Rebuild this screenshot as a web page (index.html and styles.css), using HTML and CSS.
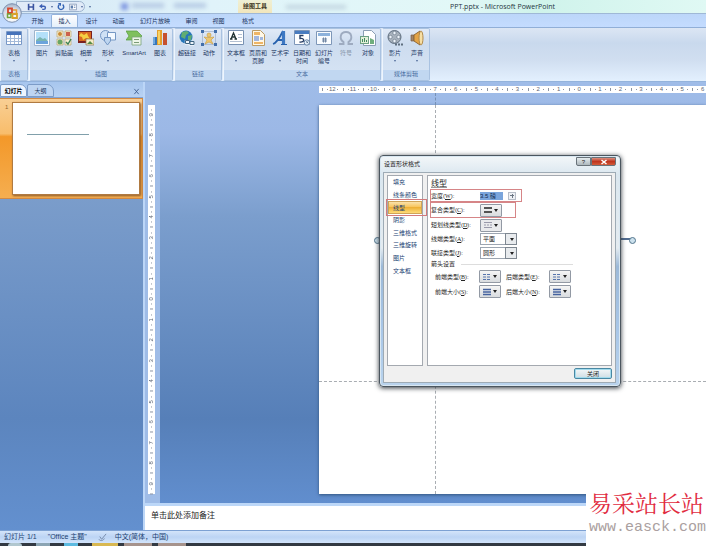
FILE: index.html
```html
<!DOCTYPE html>
<html lang="zh-CN">
<head>
<meta charset="utf-8">
<title>PPT.pptx - Microsoft PowerPoint</title>
<link rel="stylesheet" href="styles.css">
</head>
<body>
<header class="titlebar">
  <div class="quick">
    <button aria-label="保存"><svg viewBox="0 0 10 10"><path fill="#3b54a0" d="M1 1h8v8H1z"/><path fill="#e8effb" d="M3 1h4v3H3zM3 6h4v3H3z"/></svg></button>
    <button aria-label="撤消"><svg viewBox="0 0 10 10"><path fill="none" stroke="#3c5fb4" stroke-width="1.8" d="M3 4h3a2 2 0 0 1 0 4H4"/><path fill="#3c5fb4" d="M0 4l4-3v6z"/></svg></button>
    <i class="tiny-arrow"></i>
    <button aria-label="恢复"><svg viewBox="0 0 10 10"><path fill="none" stroke="#3565b5" stroke-width="1.8" d="M3 2a3.4 3.4 0 1 0 4 0"/><path fill="#3565b5" d="M1 0h4v4z"/></svg></button>
    <button aria-label="演示"><svg viewBox="0 0 10 10"><path fill="#fff" stroke="#8094b4" d="M.5 1.500h9v7h-9z"/><path fill="#5e7fae" d="M2 3h3v4H2zM6 3h2v1H6zM6 5h2v1H6z"/></svg></button>
    <i class="tiny-arrow"></i>
  </div>
  <i class="tiny-arrow more"></i>
  <div class="glass"><i class="dot"></i><i></i><i></i></div>
  <strong class="context">绘图工具</strong>
  <div class="glass second"><i></i></div>
  <h1>PPT.pptx - Microsoft PowerPoint</h1>
</header>
<button class="orb" aria-label="Office 按钮"><svg viewBox="0 0 20 20"><defs><radialGradient id="orb" cx=".5" cy=".8" r=".9"><stop offset="0" stop-color="#fff"/><stop offset=".6" stop-color="#d5dce7"/><stop offset="1" stop-color="#8b9db9"/></radialGradient></defs><circle cx="10" cy="10" r="9.300" fill="url(#orb)" stroke="#7d90ae"/><path fill="none" stroke="#d6472b" stroke-width="1.800" d="M6 10V5.500h4V10z"/><path fill="none" stroke="#e99b2e" stroke-width="1.500" d="M11 7h3.500v3.500H11"/><path fill="none" stroke="#74a53d" stroke-width="1.500" d="M9 11H5.500v3.500H9z"/><path fill="none" stroke="#d8a32a" stroke-width="1.800" d="M10.500 11H15v4h-4.500z"/></svg></button>
<nav class="tabs">
  <button>开始</button><button class="active">插入</button><button>设计</button><button>动画</button><button class="wide">幻灯片放映</button><button>审阅</button><button>视图</button><button class="format">格式</button>
</nav>
<section class="ribbon">
  <div class="group"><div class="tools">
    <button><svg viewBox="0 0 16 16"><path fill="#fff" stroke="#7898c7" d="M.5 1.500h15v13H.5z"/><path fill="#4773ba" d="M1 2h14v3H1z"/><path fill="none" stroke="#a4bad9" d="M1 8.500h14M1 11.500h14M4.500 5v9M8.500 5v9M12.500 5v9"/></svg><span>表格</span><i class="tiny-arrow"></i></button>
  </div><h2>表格</h2></div>
  <div class="group"><div class="tools">
    <button><svg viewBox="0 0 16 16"><path fill="#fafdff" stroke="#9fb4cc" d="M.5.5h15v15H.5z"/><path fill="#b4e0f9" d="M2 2h12v8H2z"/><path fill="#79b5b0" d="M2 10l4-3 3 2 2-1 3 3v1H2z"/><path fill="#6ba4dc" d="M2 11h12v3H2z"/></svg><span>图片</span></button>
    <button><svg viewBox="0 0 16 16"><path fill="#f9f0d4" stroke="#bda66c" stroke-width=".7" d="M1 1h6v6H1zM9 1h6v6H9zM1 9h6v6H1zM9 9h6v6H9z"/><circle cx="4" cy="4" r="2" fill="#ca8a35"/><path fill="#cc624d" d="M10 2h4v4h-4z"/><circle cx="4" cy="12" r="2.500" fill="#69a563"/><path fill="none" stroke="#3d8154" stroke-width="1.400" d="M10 12l2 2 3-5"/></svg><span>剪贴画</span></button>
    <button><svg viewBox="0 0 16 16"><path fill="#7a2020" d="M0 1h14v12H0z"/><path fill="#da6a21" d="M1 2h12v9H1z"/><path fill="#f4cf42" d="M3 3l3 2 3-2 1 3 2 3-4-1-3 2-1-3-3-1z"/><path fill="#f6edc8" stroke="#8d7348" stroke-width=".7" d="M8 9h8v6H8z"/><path fill="#578c47" d="M9 14l3-3 3 3H9z"/></svg><span>相册</span><i class="tiny-arrow"></i></button>
    <button><svg viewBox="0 0 16 16"><circle cx="5.500" cy="5.500" r="5" fill="#cfe1f5" stroke="#7597c4"/><path fill="#f4f9ff" stroke="#7597c4" d="M7.500 2.500h8V10h-8z"/><path fill="#bdd5f0" stroke="#7597c4" d="M4.500 7.500h6V11l-3 4-3-4z"/></svg><span>形状</span><i class="tiny-arrow"></i></button>
    <button class="smart"><svg viewBox="0 0 16 16"><path fill="#7fc05e" stroke="#569b3d" stroke-width=".7" d="M0 1h11l5 5-4 4H0l3-4z"/><path fill="#edf5e8" stroke="#7aa27a" stroke-width=".8" d="M6 7h9v8H6z"/><path stroke="#7b9b77" d="M8 9.500h5M8 12.500h5"/></svg><span>SmartArt</span></button>
    <button><svg viewBox="0 0 16 16"><path fill="#3777bb" d="M1 7h4v8H1z"/><path fill="#e4a02e" d="M5 0h5v15H5z"/><path fill="#f7d265" d="M6 1h2v13H6z"/><path fill="#c6512e" d="M11 3h4v12h-4z"/><path fill="#71a8dd" d="M1 7h2v7H1z"/></svg><span>图表</span></button>
  </div><h2>插图</h2></div>
  <div class="group"><div class="tools">
    <button><svg viewBox="0 0 16 16"><circle cx="7" cy="7" r="6.500" fill="#2676b9"/><path fill="#60ad72" d="M3 2l5-1 2 2-3 2-1 4-4-2zM9 6l4-1-1 5-3 1z"/><path fill="none" stroke="#eef4fa" stroke-width="2.500" d="M7 11.500h3v2H7zM11 12.500h3v2h-3z"/><path fill="none" stroke="#3f6582" d="M6.500 10.500h4v3h-4zM11 11.500h4v3h-4z"/></svg><span>超链接</span></button>
    <button><svg viewBox="0 0 16 16"><path fill="none" stroke="#869bbb" stroke-dasharray="1 1" d="M1.500 1.500h13v13h-13z"/><circle cx="8" cy="5" r="2" fill="#edc66f" stroke="#c79a3d" stroke-width=".6"/><path fill="#edc66f" stroke="#c79a3d" stroke-width=".6" d="M3 7l4 .5h2L13 7l-3 3 2 4-4-2-4 2 2-4z"/><path fill="#426fab" d="M0 0h3v3H0zM13 0h3v3h-3zM0 13h3v3H0zM13 13h3v3h-3z"/></svg><span>动作</span></button>
  </div><h2>链接</h2></div>
  <div class="group"><div class="tools">
    <button><svg viewBox="0 0 16 16"><path fill="#fff" stroke="#7891b2" d="M.5.5h15v14H.5z"/><path fill="none" stroke="#233" stroke-width="1.300" d="M3 9l2.500-6L8 9M4 7h3M2 9h2.500M6.500 9H9"/><path stroke="#b3c0d2" d="M10 4.500h4M10 7.500h4M2 11.500h12"/></svg><span>文本框</span><i class="tiny-arrow"></i></button>
    <button><svg viewBox="0 0 16 16"><path fill="#fff7e6" stroke="#ba9b65" d="M2.500.5h8l4 4v11h-12z"/><path fill="#efb565" d="M4 2h6v3H4zM4 12h9v2H4z"/><path fill="#a3b7de" d="M4 6h5v5H4zM10 7h3v3h-3z"/></svg><span>页眉和<br>页脚</span></button>
    <button><svg viewBox="0 0 16 16"><path fill="none" stroke="#2862ae" stroke-width="1.800" d="M1 14C5 13 8 7 11 1M5 10h7"/><path fill="none" stroke="#3d78c3" stroke-width="3.200" d="M11.500 1v13.500"/><path stroke="#2862ae" d="M9 14.500h6"/></svg><span>艺术字</span><i class="tiny-arrow"></i></button>
    <button><svg viewBox="0 0 16 16"><path fill="#fff" stroke="#7e96b8" d="M.5.500h15v14H.5z"/><path fill="#487bbf" d="M1 1h14v3H1z"/><path fill="none" stroke="#273d63" stroke-width="1.400" d="M9.500 5.500H6v3c5-1 5 4.500-.5 3.500"/><circle cx="12.800" cy="12.500" r="2.700" fill="#e2edf8" stroke="#6682a4"/><path fill="none" stroke="#45617e" stroke-width=".8" d="M12.800 11v1.500H14"/></svg><span>日期和<br>时间</span></button>
    <button><svg viewBox="0 0 16 16"><path fill="#f9fcff" stroke="#7e97b8" d="M.5 1.500h15v13H.5z"/><path fill="#8db2dc" d="M2 3h12v3H2z"/><path stroke="#7187a4" d="M6 9h5M6 11h5M7.500 7.500v5M9.500 7.500v5"/></svg><span>幻灯片<br>编号</span></button>
    <button class="disabled" disabled><svg viewBox="0 0 16 16"><path fill="none" stroke="#9eabc0" stroke-width="1.900" d="M1 14h4.500v-2C1 9 2 2 8 2s7 7 2.500 10v2H15"/></svg><span>符号</span></button>
    <button><svg viewBox="0 0 16 16"><path fill="#fff" stroke="#8b9eb5" d="M3.500.5h8l4 4v11h-12z"/><path fill="#6da083" d="M0 6h9v8H0z"/><path fill="#e3f0d8" d="M1 7h7v6H1z"/><path fill="#408960" d="M2 12V9h1v3zM4 12V8h1v4zM6 12v-2h1v2z"/><path fill="#6fae7d" d="M10 8l4 2v4h-4z"/></svg><span>对象</span></button>
  </div><h2>文本</h2></div>
  <div class="group"><div class="tools">
    <button><svg viewBox="0 0 16 16"><circle cx="7.500" cy="7" r="6.500" fill="#a7b1bc" stroke="#5f6e7f"/><g fill="#eef4fa" stroke="#5f6e7f" stroke-width=".6"><circle cx="7.500" cy="3" r="1.700"/><circle cx="3.500" cy="7" r="1.700"/><circle cx="11.500" cy="7" r="1.700"/><circle cx="7.500" cy="11" r="1.700"/></g><path stroke="#5f6e7f" stroke-width="2" stroke-dasharray="2 1" d="M8 14.500h8"/></svg><span>影片</span><i class="tiny-arrow"></i></button>
    <button><svg viewBox="0 0 16 16"><path fill="#a1856a" stroke="#765d47" stroke-width=".7" d="M2 5h3v6H2z"/><path fill="#e4a447" stroke="#906835" d="M5 5l6-4v14l-6-4z"/><ellipse cx="12" cy="8" rx="2" ry="7" fill="#f7dfa4" stroke="#b28a4a"/></svg><span>声音</span><i class="tiny-arrow"></i></button>
  </div><h2>媒体剪辑</h2></div>
</section>
<main>
  <aside>
    <div class="panel-tabs"><button class="on">幻灯片</button><button>大纲</button><button class="close" aria-label="关闭窗格"><svg viewBox="0 0 8 8"><path fill="none" stroke="#3f5d8d" d="M1.500 1l5 6M6.500 1l-5 6"/></svg></button></div>
    <div class="thumb"><span>1</span><div class="mini"><i></i></div></div>
  </aside>
  <div class="editor">
    <div class="stage">
      <div class="vruler"><span>9</span><span>8</span><span>7</span><span>6</span><span>5</span><span>4</span><span>3</span><span>2</span><span>1</span><span>0</span><span>1</span><span>2</span><span>3</span><span>4</span><span>5</span><span>6</span><span>7</span><span>8</span><span>9</span></div>
      <div class="canvas">
        <div class="hruler"><div class="scale"><span>12</span><span>11</span><span>10</span><span>9</span><span>8</span><span>7</span><span>6</span><span>5</span><span>4</span><span>3</span><span>2</span><span>1</span><span>0</span><span>1</span><span>2</span><span>3</span><span>4</span><span>5</span><span>6</span></div></div>
        <div class="slide"><i class="guide-v"></i><i class="guide-h"></i><i class="shape"></i></div>
      </div>
    </div>
    <div class="notes">单击此处添加备注</div>
  </div>
</main>
<footer class="status"><span>幻灯片 1/1</span><span>"Office 主题"</span><svg viewBox="0 0 10 10"><path fill="none" stroke="#7084a5" d="M2 4l2 3 5-6M1 7c1 2 5 2 6-1"/></svg><span>中文(简体，中国)</span></footer>
<div class="taskbar"><i class="start"></i><i class="folder"></i><i class="blue"></i><i class="yellow"></i><i class="window"></i><i class="window"></i></div>

<section class="dialog" role="dialog" aria-labelledby="dlg">
  <div class="caption"><h2 id="dlg">设置形状格式</h2><button class="help" aria-label="帮助">?</button><button class="shut" aria-label="关闭对话框"><svg viewBox="0 0 8 6"><path stroke="#fff" stroke-width="1.500" d="M1.500 1l5 4M6.500 1l-5 4"/></svg></button></div>
  <div class="body">
    <div class="panes">
      <nav class="pages"><button>填充</button><button>线条颜色</button><button class="picked">线型</button><button>阴影</button><button>三维格式</button><button>三维旋转</button><button>图片</button><button>文本框</button></nav>
      <div class="options">
        <h3>线型</h3>
        <div class="field width-field"><label for="w">宽度(<u>W</u>):</label><input id="w" value="3.5 磅"><span class="spin"></span></div>
        <div class="field compound"><label for="c">复合类型(<u>C</u>):</label><button id="c" class="pick"><svg viewBox="0 0 8 8"><path stroke="#222" stroke-width="1.500" d="M0 2h8M0 6h8"/></svg></button></div>
        <div class="field"><label for="d">短划线类型(<u>D</u>):</label><button id="d" class="pick pale"><svg viewBox="0 0 8 8"><path stroke="#99a" d="M0 1.500h8M0 6.500h8"/><path stroke="#99a" stroke-dasharray="2 1" d="M0 4h8"/></svg></button></div>
        <div class="field"><label for="a">线端类型(<u>A</u>):</label><span class="combo"><select id="a"><option>平面</option></select></span></div>
        <div class="field"><label for="j">联接类型(<u>J</u>):</label><span class="combo"><select id="j"><option>圆形</option></select></span></div>
        <h4>箭头设置</h4>
        <div class="pair"><label for="b">前端类型(<u>B</u>):</label><button id="b" class="pick"><svg viewBox="0 0 8 8"><path stroke="#5674ad" stroke-dasharray="3 1" d="M0 1.500h8M0 4h8M0 6.500h8"/></svg></button><label for="e">后端类型(<u>E</u>):</label><button id="e" class="pick"><svg viewBox="0 0 8 8"><path stroke="#5674ad" stroke-dasharray="3 1" d="M0 1.500h8M0 4h8M0 6.500h8"/></svg></button></div>
        <div class="pair"><label for="s">前端大小(<u>S</u>):</label><button id="s" class="pick"><svg viewBox="0 0 8 8"><path stroke="#4663a0" stroke-width="1.400" d="M0 1.500h8M0 4h8M0 6.500h8"/></svg></button><label for="n">后端大小(<u>N</u>):</label><button id="n" class="pick"><svg viewBox="0 0 8 8"><path stroke="#4663a0" stroke-width="1.400" d="M0 1.500h8M0 4h8M0 6.500h8"/></svg></button></div>
      </div>
    </div>
    <button class="done">关闭</button>
  </div>
</section>
<div class="watermark"><b>易采站长站</b><span>www.easck.com</span></div>
</body>
</html>
```
FILE: styles.css
```css
* { box-sizing: border-box; }
body { margin: 0; height: 100vh; display: flex; flex-direction: column; position: relative; overflow: hidden; background: #6f96cc; color: #1c3661; font: 6px/8px "Liberation Sans", "Noto Sans CJK SC", sans-serif; }
button, input, select { font: inherit; color: inherit; margin: 0; padding: 0; border: 0; background: none; }
h1, h2, h3, h4 { margin: 0; font: inherit; }
svg { display: block; }
.tiny-arrow { width: 0; height: 0; border: 1px solid transparent; border-top: 2px solid #4c6796; border-bottom: 0; flex: none; }

.titlebar { height: 13px; flex: none; display: flex; align-items: center; background: linear-gradient(90deg, #d5e7f5, #e0f3fa 30%, #e2f8f7 65%, #cff3eb 76%, #e0f9f4); overflow: hidden; }
.quick { margin-left: 16px; width: 69px; height: 11px; padding-left: 10px; display: flex; align-items: center; gap: 4px; border: 1px solid #9db4cf; border-radius: 0 6px 6px 0; background: #e1ebf8; }
.quick svg { width: 8px; height: 8px; }
.more { margin-left: 4px; }
.glass { width: 147px; display: flex; gap: 10px; padding: 0 24px 0 30px; filter: blur(2px); }
.glass i { width: 32px; height: 5px; background: #b7cbe4; }
.glass .dot { width: 7px; height: 7px; background: #7f97e0; margin-right: -6px; }
.glass.second { width: 132px; padding: 0 48px 0 14px; }
.glass.second i { width: 60px; height: 4px; background: #c1d5e0; }
.context { width: 34px; line-height: 13px; text-align: center; color: #3d3823; background: linear-gradient(#eef0d6, #f2e6bb); font-weight: bold; }
h1 { margin-left: 46px; color: #24343d; font: 7px/12px "Open Sans", "Noto Sans", sans-serif; white-space: nowrap; }
.orb { position: absolute; left: 2px; top: 3px; width: 20px; height: 20px; z-index: 1; }

.tabs { height: 14px; flex: none; display: flex; padding-left: 24px; background: linear-gradient(#bcd6f9, #c4dcff); border-top: 1px solid #9fb8d6; }
.tabs button { width: 27px; text-align: center; }
.tabs .wide { width: 46px; }
.tabs .format { width: 32px; }
.tabs .active { border: 1px solid #93b2dc; border-bottom: 0; border-radius: 2px 2px 0 0; background: linear-gradient(#fff, #e5effb); }

.ribbon { height: 55px; flex: none; display: flex; gap: 1px; background: linear-gradient(#dce6f4, #c9d9ed 28%, #d0def0 60%, #e3f0fe); border-top: 1px solid #91afd7; border-bottom: 1px solid #93b3dc; }
.group { display: flex; flex-direction: column; border: 1px solid #a9c2e1; border-left-color: #eef5fd; border-radius: 2px; background: linear-gradient(#e1eaf7, #cddcef 30%, #d4e2f3 80%); }
.tools { flex: 1; display: flex; padding: 1px 1px 0; }
.tools button { width: 22px; display: flex; flex-direction: column; align-items: center; white-space: nowrap; }
.tools svg { width: 16px; height: 16px; margin-bottom: 3px; }
.tools .tiny-arrow { margin-top: 3px; }
.tools .smart { width: 30px; }
.group:first-child .tools { padding: 1px 2px 0; }
.group h2 { height: 10px; line-height: 9px; text-align: center; color: #4a6da1; background: #c1d7f1; }
.tools .disabled { color: #8796aa; }

main { flex: 1; min-height: 0; display: flex; }
aside { width: 143px; flex: none; background: linear-gradient(#9db9e6, #7b9dcb 25%, #5c85be 75%, #6390cf); }
.panel-tabs { height: 16px; padding-top: 2px; display: flex; background: linear-gradient(#a7c6ee, #b8d2f3); border-bottom: 1px solid #83a4d3; }
.panel-tabs button { width: 27px; border: 1px solid #7c9cc8; border-radius: 2px 7px 0 0; text-align: center; background: #bed5f2; white-space: nowrap; }
.panel-tabs .on { background: #edf5ff; color: #000; font-weight: bold; }
.panel-tabs .close { width: 8px; border: 0; margin: 2px 2px 0 auto; background: none; }
.panel-tabs svg { width: 7px; height: 7px; }
.thumb { height: 101px; padding: 3px 2px 3px 0; display: flex; background: linear-gradient(#f9cf94, #f8bd6b 35%, #f39829 38%, #f5ae50); border: 1px solid #d18a44; border-left: 0; }
.thumb > span { width: 12px; padding: 1px 0 0 5px; color: #95662c; }
.mini { flex: 1; background: #fff; border: 1px solid #b07a41; box-shadow: 1px 1px 2px #8b5a2c; padding: 31px 0 0 14px; }
.mini i { display: block; width: 62px; height: 1px; background: #81a0ab; }
.editor { flex: 1; min-width: 0; display: flex; flex-direction: column; border-left: 2px solid #bcd6f7; }
.stage { flex: 1; min-height: 0; display: flex; background: #9fbce7; }
.vruler { width: 7px; flex: none; margin: 23px 5px 9px 3px; display: grid; grid-template-rows: repeat(19, 1fr); background: #fff; color: #5c6472; }
.vruler span { writing-mode: vertical-rl; transform: rotate(180deg); text-align: center; line-height: 7px; font-size: 6px; background: linear-gradient(#8d95a2, #8d95a2) 2px 0 / 3px 1px no-repeat, linear-gradient(#8d95a2, #8d95a2) 3px 5px / 1px 1px no-repeat, linear-gradient(#8d95a2, #8d95a2) 3px 15px / 1px 1px no-repeat; }
.canvas { flex: 1; min-width: 0; padding: 4px 0 9px 159px; display: flex; flex-direction: column; background: linear-gradient(#9fbce8, #9cb8e6 12%, #7b9ecd 32%, #567fb8 80%, #618ece); }
.hruler { height: 7px; flex: none; margin-bottom: 12px; padding-left: 3px; background: #fff; overflow: hidden; }
.scale { margin-right: -7px; display: grid; grid-template-columns: repeat(19, 1fr); color: #5c6472; text-align: center; font-size: 6px; line-height: 7px; }
.scale span { background: linear-gradient(#8d95a2, #8d95a2) 0 2px / 1px 3px no-repeat, linear-gradient(#8d95a2, #8d95a2) 5px 3px / 1px 1px no-repeat, linear-gradient(#8d95a2, #8d95a2) 15px 3px / 1px 1px no-repeat; }
.slide { flex: 1; position: relative; background: #fff; box-shadow: 0 1px 3px #31547f; }
.guide-v { position: absolute; left: 116px; top: 0; bottom: 0; border-left: 1px dashed #a9adb2; }
.guide-h { position: absolute; top: 276px; left: 0; right: 0; border-top: 1px dashed #a9adb2; }
.guide-v::before { content: ""; position: absolute; left: -1px; top: -12px; height: 12px; border-left: 1px dashed #7791b6; }
.shape { position: absolute; left: 57px; top: 133px; width: 258px; height: 2px; background: #526d91; }
.shape::before, .shape::after { content: ""; position: absolute; left: -2px; top: -1px; width: 5px; height: 5px; border: 1px solid #53758d; border-radius: 50%; background: #cce1ed; }
.shape::after { left: auto; right: -2px; }
.notes { height: 27px; flex: none; padding: 5px 6px; border-top: 3px solid #bcd7f8; background: #fff; color: #222; font-size: 8px; line-height: 10px; }
.status { height: 13px; flex: none; padding: 0 4px; display: flex; align-items: center; gap: 11px; background: linear-gradient(#d3e4fa, #bcd4f4 50%, #d2e4fb); border-top: 1px solid #7da1d3; color: #203e70; }
.status span { font-size: 7px; }
.status svg { width: 9px; height: 9px; margin-right: -3px; }
.taskbar { height: 3px; flex: none; padding-left: 8px; display: flex; gap: 14px; background: #333a43; }
.taskbar i { width: 14px; background: #8ba4b3; }
.taskbar .start { border-radius: 7px 7px 0 0; background: #b1c7cf; }
.taskbar .blue { background: #5dbbe1; }
.taskbar .yellow { width: 26px; background: #d8b852; }
.taskbar .window { width: 28px; background: #a6938c; margin-left: -8px; }

.dialog { position: absolute; left: 379px; top: 155px; width: 242px; padding: 1px 4px 3px 3px; border: 1px solid #4b565f; border-radius: 4px; background: linear-gradient(#f3f7f9, #dbe7ef 8%, #e4ebf0 40%, #9cb9d8 48%, #a8c6e7 75%, #b9d3ed); box-shadow: 0 1px 5px #2d343b, inset 0 0 0 1px #d9e7f1; color: #252525; }
.caption { height: 15px; display: flex; align-items: flex-start; }
.caption h2 { margin: 0 auto 0 1px; line-height: 14px; color: #222; }
.caption button { height: 9px; border: 1px solid #69737a; }
.help { width: 15px; background: linear-gradient(#e5ebed, #aeb8bd); line-height: 6px; border-radius: 0 0 0 2px; }
.shut { width: 25px; background: linear-gradient(#dc8e7e, #bf351e 50%, #d25b3a); border-radius: 0 0 2px 0; }
.shut svg { width: 8px; height: 6px; margin: auto; }
.body { padding: 2px 3px 3px; background: #f0f0f0; border: 1px solid #9eabb5; display: flex; flex-direction: column; }
.panes { display: grid; grid-template-columns: 36px 1fr; gap: 4px; }
.pages { height: 191px; border: 1px solid #a4a9b0; background: #fff; padding-bottom: 88px; display: grid; grid-template-rows: repeat(8, 1fr); }
.pages button { text-align: left; padding-left: 5px; color: #213f73; position: relative; white-space: nowrap; }
.pages .picked { background: linear-gradient(#fae2ab, #f8c55b 45%, #edb037 50%, #fddc79); border: 1px solid #d0a457; padding-left: 4px; }
.picked::after { content: ""; position: absolute; inset: -3px -6px -3px -3px; border: 1px solid #d27a7c; }
.options { border: 1px solid #a4a9b0; background: #fff; padding: 2px 3px; }
.options h3 { font-size: 8px; line-height: 12px; text-decoration: underline; text-decoration-color: #999; }
.field { height: 14px; display: flex; align-items: center; }
.field label { width: 49px; white-space: nowrap; }
.width-field { height: 11px; width: 90px; outline: 1px solid #d68587; margin-bottom: 2px; }
.compound { height: 14px; width: 84px; outline: 1px solid #d68587; margin-bottom: 1px; }
label u { font-family: "Liberation Serif", serif; }
.width-field input { width: 23px; height: 8px; background: #7aa5dc; color: #10254a; line-height: 8px; }
.spin { width: 8px; height: 8px; margin-left: 5px; border: 1px solid #b8bec8; background: linear-gradient(#6b7683, #6b7683) center / 4px 1px no-repeat, linear-gradient(#6b7683, #6b7683) center / 1px 4px no-repeat, #eef1f5; }
.pick { width: 22px; height: 13px; padding: 0 3px; display: flex; align-items: center; justify-content: space-between; border: 1px solid #9299a4; border-radius: 1px; background: linear-gradient(#f5f5f5, #d9dcdf); }
.pick svg { width: 8px; height: 8px; }
.pick::after { content: ""; border: 2px solid transparent; border-top: 3px solid #222; border-bottom: 0; }
.pick.pale { background: #e9eaec; }
.combo { width: 37px; height: 12px; display: flex; position: relative; }
.combo select { width: 100%; appearance: none; border: 1px solid #9ca5b1; padding-left: 2px; background: #fff; }
.combo::before { content: ""; position: absolute; right: 0; top: 0; bottom: 0; width: 10px; border: 1px solid #7e8791; background: #e8ebee; pointer-events: none; }
.combo::after { content: ""; position: absolute; right: 3px; top: 5px; border: 2px solid transparent; border-top: 3px solid #222; border-bottom: 0; pointer-events: none; }
.options h4 { width: 142px; line-height: 9px; margin-bottom: 1px; background: linear-gradient(#ddd, #ddd) right center / 112px 1px no-repeat; }
.pair { display: grid; grid-template-columns: 44px 22px 48px 22px; margin: 0 0 2px 4px; align-items: center; white-space: nowrap; }
.pair label:nth-of-type(2) { padding-left: 5px; }
.done { width: 38px; height: 11px; margin: 2px 0 0 auto; border: 1px solid #4988a3; border-radius: 2px; background: linear-gradient(#f4f7f8, #cfdee4); box-shadow: inset 0 0 0 1px #a3dbed; line-height: 8px; }
.watermark { position: absolute; right: 0; bottom: 0; width: 120px; height: 56px; padding: 0 1px 0 3px; background: #fff; display: flex; flex-direction: column; white-space: nowrap; }
.watermark b { color: #e12c3f; font: 23px/26px "AR PL UKai CN", "KaiTi", "Noto Serif CJK SC", "Noto Sans CJK SC", serif; }
.watermark span { color: #aaa0a0; font: 15px/24px "Liberation Mono", monospace; }
```
